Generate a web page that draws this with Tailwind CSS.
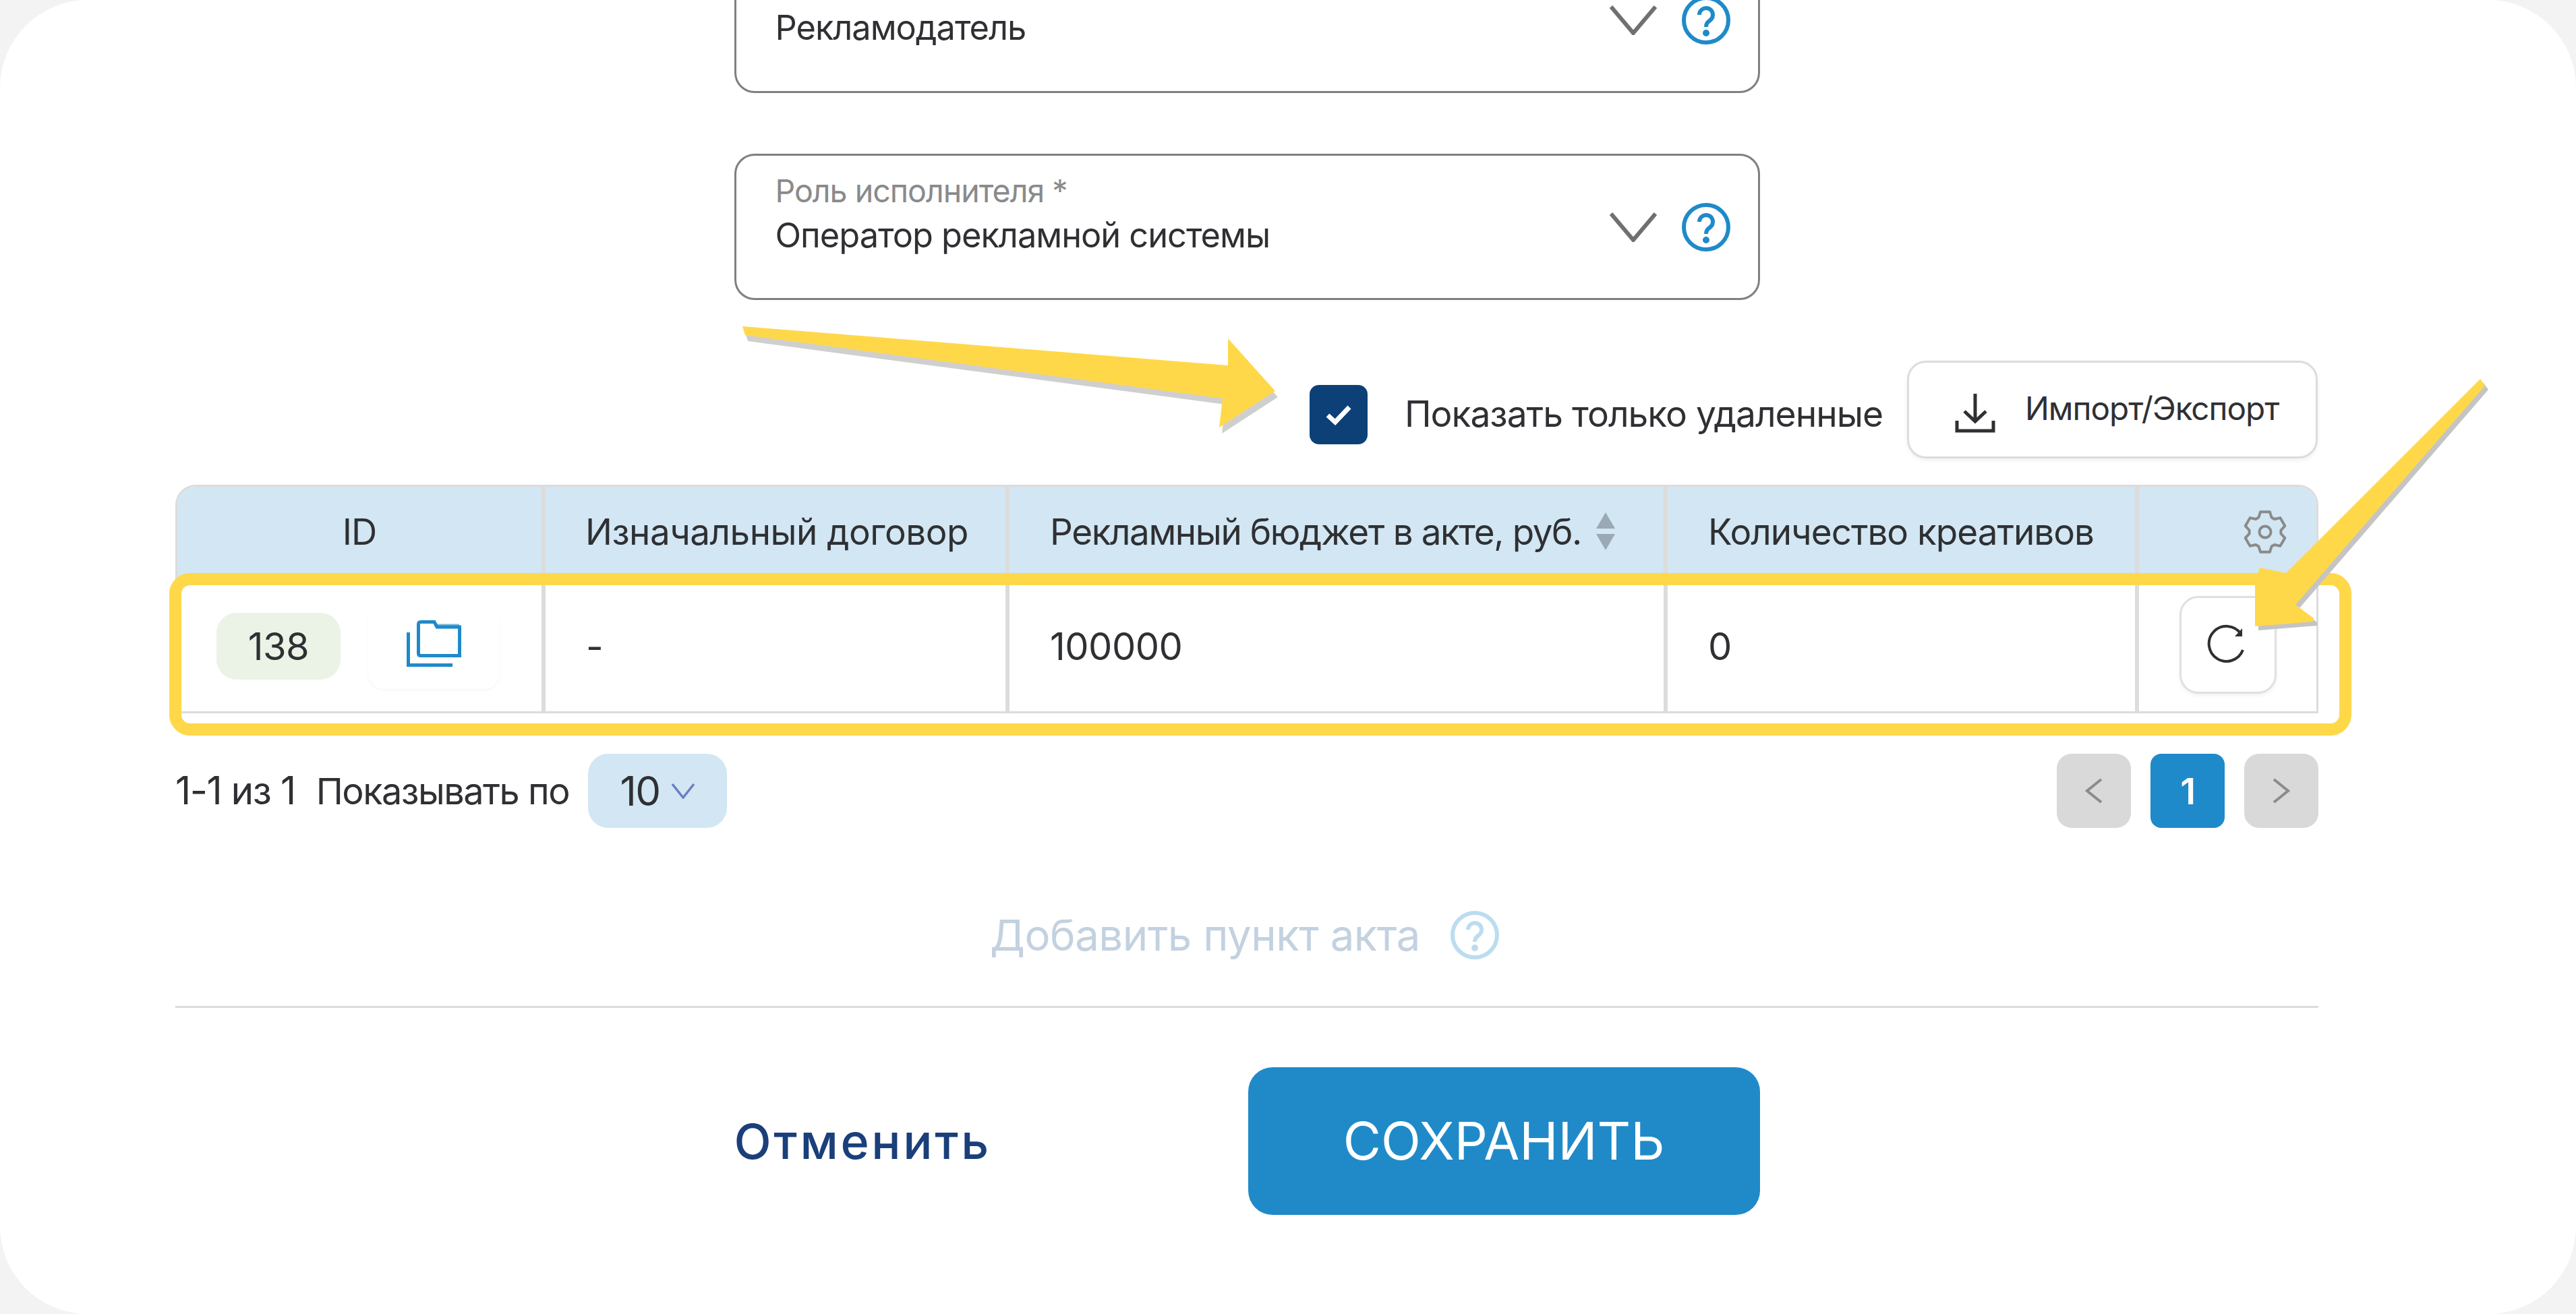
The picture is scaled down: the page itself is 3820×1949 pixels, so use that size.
<!DOCTYPE html>
<html lang="ru">
<head>
  <meta charset="UTF-8">
  <title>Акт</title>
  <script src="https://cdn.jsdelivr.net/npm/@tailwindcss/browser@4"></script>
</head>
<body class="bg-[#f3f3f3] font-['Inter',sans-serif] text-[#2f3033]">
  <div class="relative w-[3820px] h-[1949px] bg-white rounded-[130px] overflow-hidden">
    <div class="ml-[260px] w-[3178px] -mt-[79px]">

      <!-- select fields -->
      <div class="mx-auto w-[1521px] h-[217px] border-[3px] border-[#808080] rounded-[30px] pl-[58px] pr-[40px] flex justify-between items-center">
        <div class="self-start pt-[85px] text-[50.5px] leading-[64px] tracking-[-1px]">Рекламодатель</div>
        <div class="flex items-center gap-[36px]">
          <svg class="w-[70px] h-[44px]" viewBox="0 0 70 44" fill="none" stroke="#707070" stroke-width="6"><path d="M2 2 L35 41 L68 2"/></svg>
          <svg class="w-[74px] h-[74px]" viewBox="0 0 74 74" fill="none" stroke="#1f8ac9" stroke-width="6"><circle cx="37" cy="37" r="33"/><path d="M27 29 a10 10 0 1 1 16 8 c-4 3 -6 5 -6 10"/><circle cx="37" cy="56" r="2" fill="#1f8ac9"/></svg>
        </div>
      </div>
      <div class="mt-[90px] mx-auto w-[1521px] h-[217px] border-[3px] border-[#808080] rounded-[30px] pl-[58px] pr-[40px] flex justify-between items-center">
        <div class="self-start pt-[26px]">
          <div class="text-[46.5px] leading-[52px] tracking-[-1px] text-[#8a8a8a]">Роль исполнителя *</div>
          <div class="mt-[8px] text-[50.5px] leading-[64px] tracking-[-1px]">Оператор рекламной системы</div>
        </div>
        <div class="flex items-center gap-[36px]">
          <svg class="w-[70px] h-[44px]" viewBox="0 0 70 44" fill="none" stroke="#707070" stroke-width="6"><path d="M2 2 L35 41 L68 2"/></svg>
          <svg class="w-[74px] h-[74px]" viewBox="0 0 74 74" fill="none" stroke="#1f8ac9" stroke-width="6"><circle cx="37" cy="37" r="33"/><path d="M27 29 a10 10 0 1 1 16 8 c-4 3 -6 5 -6 10"/><circle cx="37" cy="56" r="2" fill="#1f8ac9"/></svg>
        </div>
      </div>

      <!-- toolbar -->
      <div class="mt-[90px] flex justify-end pr-[1px]">
        <div class="mt-[36px] flex items-start">
          <div class="w-[86px] h-[88px] rounded-[14px] bg-[#0d4077] flex items-center justify-center">
            <svg class="w-[40px] h-[32px]" viewBox="0 0 40 32" fill="none" stroke="#fff" stroke-width="7"><path d="M4 17 L15 27 L36 5"/></svg>
          </div>
          <span class="ml-[55px] mt-[11px] text-[53.3px] leading-[64px] tracking-[-1px]">Показать только удаленные</span>
        </div>
        <button class="ml-[36px] w-[609px] h-[145px] border-[3px] border-[#dcdcdc] rounded-[28px] bg-white shadow-[0_3px_6px_rgba(0,0,0,0.06)] flex items-center pl-[68px]">
          <svg class="w-[60px] h-[60px] mt-[8px]" viewBox="0 0 60 60" fill="none" stroke="#2f3033" stroke-width="5"><path d="M30 2 V42 M14 28 L30 43 L46 28"/><path d="M3 42 V57 H57 V42"/></svg>
          <span class="ml-[44px] text-[47.6px] leading-[60px] tracking-[-1px] -mt-[4px]">Импорт/Экспорт</span>
        </button>
      </div>

      <!-- table -->
      <div class="mt-[39px] border-t-[3px] border-b-[3px] border-x-[3px] border-[#dcdcdc] rounded-t-[30px] overflow-hidden">
        <div class="grid grid-cols-[546px_688px_976px_699px_1fr] h-[134px] bg-[#d2e6f3] text-[53px] tracking-[-1px]">
          <div class="border-r-[6px] border-[#dcdcdc] flex items-center justify-center pt-[2px]">ID</div>
          <div class="border-r-[6px] border-[#dcdcdc] flex items-center pl-[59px] pt-[2px] tracking-[-0.5px]">Изначальный договор</div>
          <div class="border-r-[6px] border-[#dcdcdc] flex items-center pl-[60px] pt-[2px]">
            <span class="tracking-[-1.4px]">Рекламный бюджет в акте, руб.</span>
            <svg class="ml-[20px] -mt-[4px] w-[32px] h-[56px]" viewBox="0 0 32 56" fill="#9aa9b5"><path d="M16 0 L30 24 H2 Z"/><path d="M2 32 H30 L16 56 Z"/></svg>
          </div>
          <div class="border-r-[6px] border-[#dcdcdc] flex items-center pl-[60px] pt-[2px]">Количество креативов</div>
          <div class="flex items-center justify-end pr-[42px]">
            <svg class="w-[68px] h-[68px]" viewBox="0 0 24 24" fill="none" stroke="#8a8a8a" stroke-width="1.4" stroke-linejoin="round"><path d="M8.62 4.41 9.57 1.48H14.43L15.38 4.41 16.88 5.28 19.9 4.63 22.33 8.84 20.26 11.13V12.87L22.33 15.16 19.9 19.37 16.88 18.72 15.38 19.59 14.43 22.52H9.57L8.62 19.59 7.12 18.72 4.1 19.37 1.67 15.16 3.74 12.87V11.13L1.67 8.84 4.1 4.63 7.12 5.28Z"/><circle cx="12" cy="12" r="3"/></svg>
          </div>
        </div>
        <div class="grid grid-cols-[546px_688px_976px_699px_1fr] h-[199px] text-[56px] tracking-[-0.5px]">
          <div class="border-r-[6px] border-[#dcdcdc] flex items-center pl-[58px] pt-[6px]">
            <div class="w-[184px] h-[99px] rounded-[30px] bg-[#eaf3e6] flex items-center justify-center">138</div>
            <div class="ml-[41px] w-[195px] h-[126px] rounded-[24px] bg-white shadow-[0_2px_4px_rgba(0,0,0,0.04)] flex items-start justify-center pt-[24px]">
              <svg class="w-[81px] h-[69px]" viewBox="0 0 81 69" fill="none" stroke="#1f8ac9" stroke-width="5"><path d="M17.5 6 Q17.5 2.5 21 2.5 H41 L45 10 H78.5 V52.5 H21 Q17.5 52.5 17.5 49 Z"/><path d="M44 7 H78" stroke-width="3" opacity=".6"/><path d="M2.5 18 V66.5 H68"/></svg>
            </div>
          </div>
          <div class="border-r-[6px] border-[#dcdcdc] flex items-center pl-[60px] pt-[6px]">-</div>
          <div class="border-r-[6px] border-[#dcdcdc] flex items-center pl-[60px] pt-[6px]">100000</div>
          <div class="border-r-[6px] border-[#dcdcdc] flex items-center pl-[60px] pt-[6px]">0</div>
          <div class="flex items-center pl-[60px] pt-[2px]">
            <button class="w-[144px] h-[145px] border-[3px] border-[#e0e0e0] rounded-[28px] bg-white shadow-[0_3px_6px_rgba(0,0,0,0.05)] flex items-center justify-center">
              <svg class="w-[62px] h-[62px]" viewBox="0 0 62 62" fill="none" stroke="#2f3033" stroke-width="4"><path d="M53 38 A26 26 0 1 1 50 14"/><path d="M52 6 V18 H41 Z" fill="#2f3033" stroke="none"/></svg>
            </button>
          </div>
        </div>
      </div>

      <!-- pagination -->
      <div class="mt-[60px] flex items-center text-[54px] tracking-[-1.5px]">
        <span class="text-[57px]">1-1 из 1</span>
        <span class="ml-[31px]">Показывать по</span>
        <div class="ml-[28px] w-[206px] h-[110px] rounded-[30px] bg-[#d2e6f3] flex items-center justify-center gap-[16px]">
          <span class="text-[60px]">10</span>
          <svg class="w-[36px] h-[24px]" viewBox="0 0 36 24" fill="none" stroke="#6a7fc0" stroke-width="3.5"><path d="M2 2 L18 22 L34 2"/></svg>
        </div>
        <div class="ml-auto flex gap-[29px]">
          <div class="w-[110px] h-[110px] rounded-[22px] bg-[#d9d9d9] flex items-center justify-center">
            <svg class="w-[26px] h-[38px]" viewBox="0 0 26 38" fill="none" stroke="#8c8c8c" stroke-width="4"><path d="M24 2 L3 19 L24 36"/></svg>
          </div>
          <div class="w-[110px] h-[110px] rounded-[16px] bg-[#1f8ac9] text-white font-semibold flex items-center justify-center">1</div>
          <div class="w-[110px] h-[110px] rounded-[22px] bg-[#d9d9d9] flex items-center justify-center">
            <svg class="w-[26px] h-[38px]" viewBox="0 0 26 38" fill="none" stroke="#8c8c8c" stroke-width="4"><path d="M2 2 L23 19 L2 36"/></svg>
          </div>
        </div>
      </div>

      <!-- add item -->
      <div class="mt-[123px] h-[72px] flex items-center pl-[1208px] text-[63.5px] tracking-[-0.5px] text-[#c3d1e0]">
        <span>Добавить пункт акта</span>
        <svg class="ml-[44px] w-[74px] h-[74px]" viewBox="0 0 74 74" fill="none" stroke="#bcdcf0" stroke-width="6"><circle cx="37" cy="37" r="33"/><path d="M27 29 a10 10 0 1 1 16 8 c-4 3 -6 5 -6 10"/><circle cx="37" cy="56" r="2" fill="#bcdcf0"/></svg>
      </div>
      <div class="mt-[69px] h-[3px] bg-[#dcdcdc]"></div>

      <!-- footer -->
      <div class="mt-[88px] mx-auto w-[1521px] flex justify-between items-center">
        <button class="text-[72px] tracking-[3.6px] font-medium text-[#1a3f7a]">Отменить</button>
        <button class="w-[759px] h-[219px] rounded-[36px] bg-[#208ac9] text-white text-[77px]">СОХРАНИТЬ</button>
      </div>
    </div>

    <!-- annotations drawn over the screenshot -->
    <svg class="absolute inset-0 w-[3820px] h-[1949px] pointer-events-none" viewBox="0 0 3820 1949">
      <rect x="260" y="859" width="3218" height="223" rx="22" fill="none" stroke="#ffd84a" stroke-width="18"/>
      <polygon transform="translate(4 9)" points="1101,484 1821,542 1821,502 1891,580 1808,634 1813,591 1105,497" fill="#cfcfcf"/>
      <polygon points="1101,484 1821,542 1821,502 1891,580 1808,634 1813,591 1105,497" fill="#ffd84a"/>
      <polygon transform="translate(5 6)" points="3351,842 3390,850 3671,569 3678,562 3685,572 3404,897 3431,917 3431,922 3344,929 3344,864" fill="#c4c4c4"/>
      <polygon points="3351,842 3390,850 3671,569 3678,562 3685,572 3404,897 3431,917 3431,922 3344,929 3344,864" fill="#ffd84a"/>
    </svg>
  </div>
</body>
</html>
